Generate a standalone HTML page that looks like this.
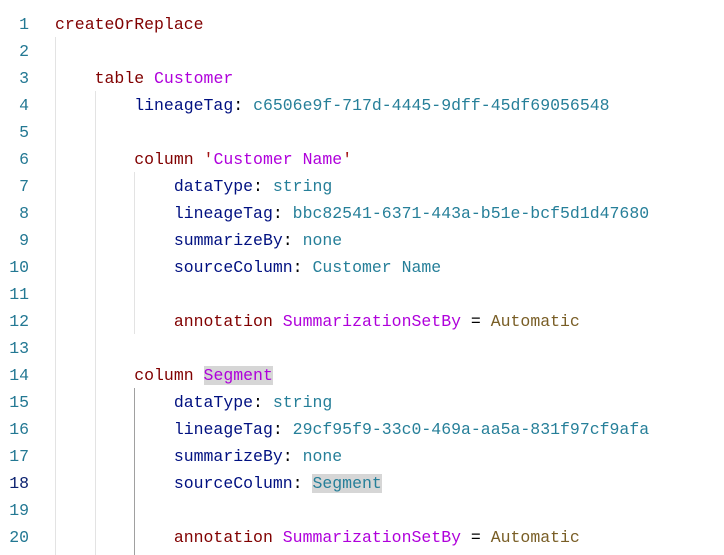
<!DOCTYPE html>
<html><head><style>
body{margin:0;background:#fff;width:724px;height:555px;overflow:hidden;position:relative;font-family:"Liberation Mono","DejaVu Sans Mono",monospace;font-size:16.5px;}
.l{position:absolute;left:0;height:27px;line-height:27px;white-space:pre;width:724px}
.n{position:absolute;left:0;width:29px;text-align:right;color:#237893}
.c{position:absolute;left:55px}
.k{color:#800000}.p{color:#001080}.v{color:#267f99}.s{color:#a31515}.m{color:#af00db}.a{color:#795e26}.h{background:#d6d6d6}
.g{position:absolute;width:1px;background:#e3e3e3}
</style></head><body>
<div class="g" style="left:55px;top:37px;height:518px"></div>
<div class="g" style="left:95px;top:91px;height:464px"></div>
<div class="g" style="left:134px;top:172px;height:162px"></div>
<div class="g" style="left:134px;top:388px;height:167px;background:#a0a0a0"></div>
<div class="l" style="top:11px"><span class="n">1</span><span class="c"><span class="k">createOrReplace</span></span></div>
<div class="l" style="top:38px"><span class="n">2</span></div>
<div class="l" style="top:65px"><span class="n">3</span><span class="c">    <span class="k">table</span> <span class="m">Customer</span></span></div>
<div class="l" style="top:92px"><span class="n">4</span><span class="c">        <span class="p">lineageTag</span>: <span class="v">c6506e9f-717d-4445-9dff-45df69056548</span></span></div>
<div class="l" style="top:119px"><span class="n">5</span></div>
<div class="l" style="top:146px"><span class="n">6</span><span class="c">        <span class="k">column</span> <span class="s">'</span><span class="m">Customer Name</span><span class="s">'</span></span></div>
<div class="l" style="top:173px"><span class="n">7</span><span class="c">            <span class="p">dataType</span>: <span class="v">string</span></span></div>
<div class="l" style="top:200px"><span class="n">8</span><span class="c">            <span class="p">lineageTag</span>: <span class="v">bbc82541-6371-443a-b51e-bcf5d1d47680</span></span></div>
<div class="l" style="top:227px"><span class="n">9</span><span class="c">            <span class="p">summarizeBy</span>: <span class="v">none</span></span></div>
<div class="l" style="top:254px"><span class="n">10</span><span class="c">            <span class="p">sourceColumn</span>: <span class="v">Customer Name</span></span></div>
<div class="l" style="top:281px"><span class="n">11</span></div>
<div class="l" style="top:308px"><span class="n">12</span><span class="c">            <span class="k">annotation</span> <span class="m">SummarizationSetBy</span> = <span class="a">Automatic</span></span></div>
<div class="l" style="top:335px"><span class="n">13</span></div>
<div class="l" style="top:362px"><span class="n">14</span><span class="c">        <span class="k">column</span> <span class="m h">Segment</span></span></div>
<div class="l" style="top:389px"><span class="n">15</span><span class="c">            <span class="p">dataType</span>: <span class="v">string</span></span></div>
<div class="l" style="top:416px"><span class="n">16</span><span class="c">            <span class="p">lineageTag</span>: <span class="v">29cf95f9-33c0-469a-aa5a-831f97cf9afa</span></span></div>
<div class="l" style="top:443px"><span class="n">17</span><span class="c">            <span class="p">summarizeBy</span>: <span class="v">none</span></span></div>
<div class="l" style="top:470px"><span class="n" style="color:#0b216f">18</span><span class="c">            <span class="p">sourceColumn</span>: <span class="v h">Segment</span></span></div>
<div class="l" style="top:497px"><span class="n">19</span></div>
<div class="l" style="top:524px"><span class="n">20</span><span class="c">            <span class="k">annotation</span> <span class="m">SummarizationSetBy</span> = <span class="a">Automatic</span></span></div>
</body></html>
